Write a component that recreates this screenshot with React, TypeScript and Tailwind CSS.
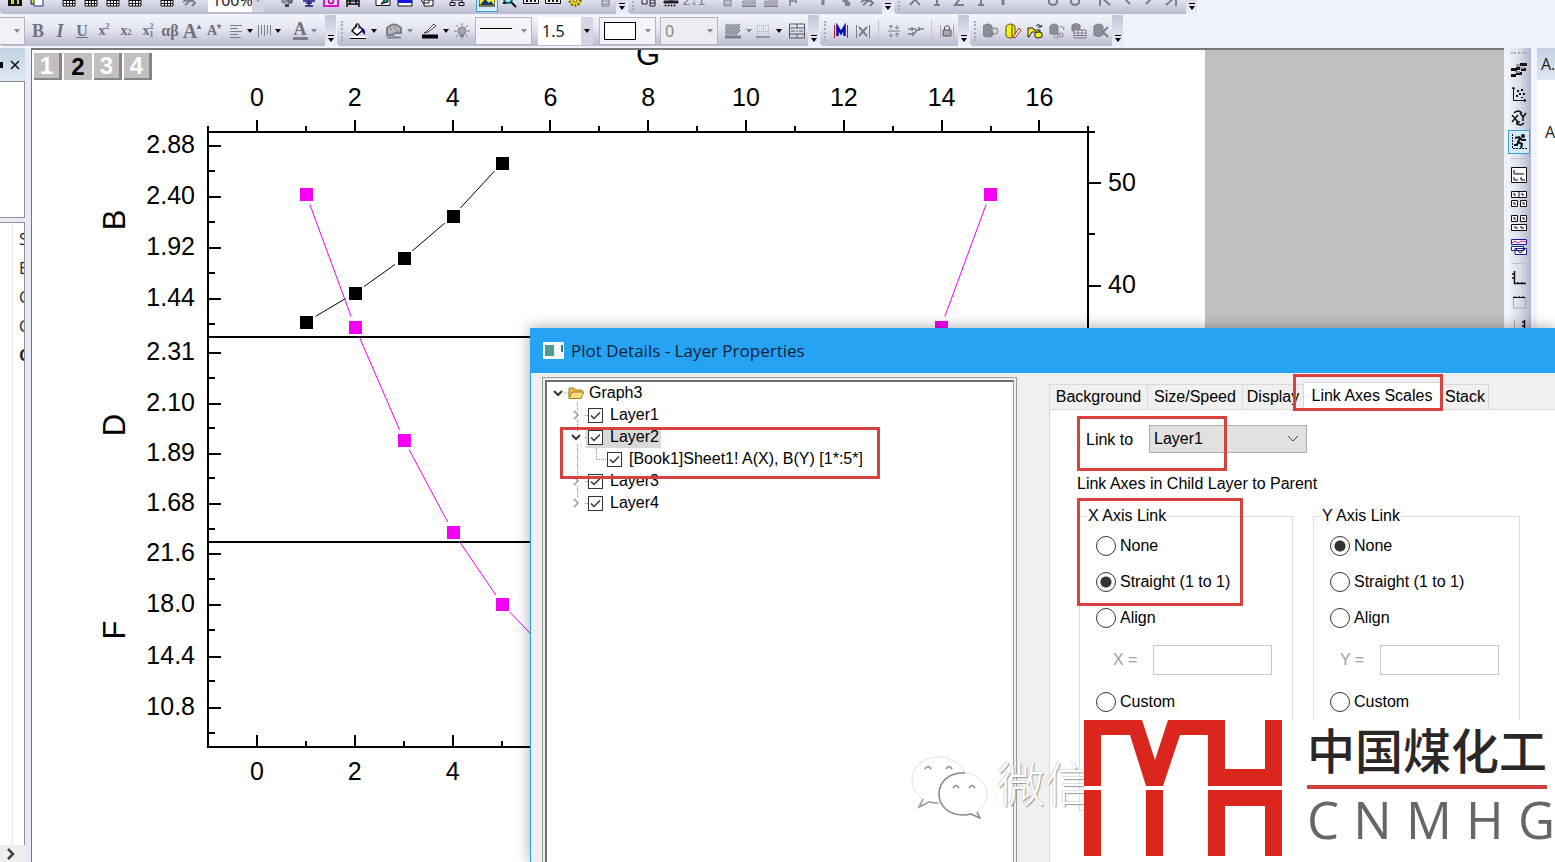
import type { ReactNode } from "react";

const GRAY = "#7d7f87";

/* 16x16 toolbar glyphs */
const glyphs: Record<string, ReactNode> = {
  sheet: (<><path d="M2 2h12v12H2z" fill="#fff" stroke="#111" /><path d="M2 5.500h12M2 8.500h12M2 11.500h12M5.500 2v12M8.500 2v12M11.500 2v12" stroke="#111" /></>),
  binder: (<><path d="M1 4h14v10H1z" fill="#111" /><path d="M4 8h3v4H4zM10 8h2v4h-2z" fill="#d8cf3a" /></>),
  pages: (<><path d="M2 3h9v9H2z" fill="#efe23c" stroke="#111" /><path d="M5 6h9v8H5z" fill="#fff" stroke="#1b2a9b" /></>),
  redo: <path d="M2 10l5-3v2h5l2 2-3 3M4 13l4-3" stroke={GRAY} fill="none" strokeWidth="2" />,
  people: (<><circle cx="5" cy="9" r="3" fill="#8b93a0" /><circle cx="11" cy="9" r="3" fill="#5d7682" /><path d="M6 12h4v3H6z" fill="#444" /></>),
  easel: <path d="M2 9h12M8 9v5M4 14h8M5 11h6" stroke="#15157a" fill="none" strokeWidth="1.500" />,
  magenta: (<><path d="M1 2h14v12H1z" fill="#ffd8fb" stroke="#e010d0" strokeWidth="2" /><circle cx="8" cy="9" r="2.500" fill="none" stroke="#b000a0" strokeWidth="1.500" /></>),
  film: <path d="M2 2v13M14 2v13M2 9h12M2 12h12M5 8v5M11 8v5" stroke="#111" fill="none" strokeWidth="1.500" />,
  panel: (<><path d="M1 2h14v11.500H1z" fill="#fff" stroke="#111" /><path d="M6 12l7-9v7z" fill="#158a8a" stroke="#111" /></>),
  bluewin: (<><path d="M1 1h14v13H1z" fill="#fff" stroke="#111" /><path d="M1 8h14v3H1z" fill="#1616e0" /></>),
  cube: <path d="M1 6h9v5H4zM5 8h9v6H5z" fill="#fff" stroke="#111" />,
  tree: <path d="M8 2v6M3 8h10M3 8v3M13 8v3M1 10.500h5v3H1zM10 10.500h5v3h-5z" fill="none" stroke="#111" />,
  image: (<><path d="M0 3h16v11H0z" fill="#f2e53b" stroke="#111" /><path d="M1 13l5-6 4 4 2-2 3 4z" fill="#133a67" /></>),
  magnify: (<><circle cx="7" cy="7" r="4" fill="#bfe9f5" stroke="#0a6b86" strokeWidth="2" /><path d="M10 10l5 5M2 11h3" stroke="#111" strokeWidth="2" /></>),
  dots: (<><path d="M.5 3h15v8.500H.5z" fill="#fff" stroke="#111" /><path d="M3 9h2M7 9h2M11 9h2" stroke="#111" strokeWidth="2" /></>),
  gear: (<><circle cx="8" cy="8" r="5.500" fill="#f0d71d" stroke="#7b6a00" strokeWidth="2.500" strokeDasharray="2 1.500" /><circle cx="8" cy="8" r="2" fill="#fff" stroke="#7b6a00" /></>),
  list: <path d="M5 2h7v12H5zM5 6h7M5 9h7M5 12h7" fill="none" stroke={GRAY} />,
  listdark: <path d="M1 7h5v5H1zM9 4h5v10H9zM9 8h5M9 11h5" fill="none" stroke="#222" />,
  stamp: <path d="M6 2h4v6H6zM1 9h14v2H1zM2 13h1v1H2zM5 13h1v1H5zM8 13h1v1H8zM11 13h1v1h-1z" fill="#222" stroke="#222" />,
  hist: <path d="M2 14V9h2v5M6 14V7h2v7M10 14V4h2v10M14 14V8M1 14.500h14" fill="none" stroke={GRAY} />,
  bracket: <path d="M4 9h8M5 9v5M11 9v2" fill="none" stroke={GRAY} strokeWidth="1.500" />,
  pencil: <path d="M3 5l8 8M5 4l8 8M8 13h5" fill="none" stroke={GRAY} strokeWidth="2" />,
  letterX: <path d="M3 2l10 11M13 2L3 13" fill="none" stroke={GRAY} strokeWidth="2" />,
  letterT: <path d="M8 2v11M5 13h6" fill="none" stroke={GRAY} strokeWidth="2" />,
  letterZ: <path d="M12 3l-8 10h9" fill="none" stroke={GRAY} strokeWidth="2" />,
  stem: <path d="M8 3v10" fill="none" stroke={GRAY} strokeWidth="3" />,
  round: <path d="M4 5v6q4 4 8 0V5" fill="none" stroke={GRAY} strokeWidth="2" />,
  first: <path d="M3 2v12M5 6l8 7" fill="none" stroke={GRAY} strokeWidth="2" />,
  prev: <path d="M11 3L6 7l5 5" fill="none" stroke={GRAY} strokeWidth="2" />,
  next: <path d="M5 3l5 4-5 5" fill="none" stroke={GRAY} strokeWidth="2" />,
  last: <path d="M13 2v12M11 6l-8 7" fill="none" stroke={GRAY} strokeWidth="2" />,
  align: <path d="M2 2.500h12M2 5.500h8M2 8.500h12M2 11.500h8M2 14.500h11" stroke={GRAY} />,
  valign: <path d="M2.500 2v12M5.500 2v9M8.500 2v11M11.500 2v9M14.500 2v10" stroke={GRAY} />,
  bucket: (<><path d="M7 2L2 8l5 4 6-5-4-4" fill="#fff" stroke="#111" strokeWidth="1.500" /><path d="M6 5V1h3v5" stroke="#111" fill="none" /><path d="M11 5q5 0 4 7l-3-3z" fill="#15157a" /><path d="M0 14h16" stroke="#fff" strokeWidth="2" /><path d="M0 15.500h16" stroke="#111" /></>),
  palette: (<><path d="M1 5q7-7 14 0v5H9l-2 2H1z" fill="#b6b7bd" stroke={GRAY} strokeWidth="2" /><path d="M4 6h2M8 5h2M10 8h3" stroke="#777" /><path d="M1 14.500h14" stroke={GRAY} strokeWidth="2" /></>),
  linecolor: (<><path d="M4 9l8-8 2 2-8 6-4 1z" fill="#fff" stroke="#444" /><path d="M0 13.500h16" stroke="#000" strokeWidth="4" /></>),
  bulb: (<><circle cx="8" cy="8" r="4" fill="#a5a7ad" stroke={GRAY} /><path d="M6 12h4v2H6z" fill={GRAY} /><path d="M8 0v3M8 13v3M0 8h3M13 8h3M2 2l2 2M12 12l2 2M14 2l-2 2M2 14l2-2" stroke={GRAY} /></>),
  hatch: (<><path d="M0 10L9 1M0 7l6-6M1 12L12 1M4 12L15 1M7 12l8-8M10 12l5-5M0 4l3-3" stroke={GRAY} strokeWidth="1.500" /><path d="M0 14h16" stroke={GRAY} strokeWidth="3" /></>),
  grid: (<><path d="M2 2.500h12M2 8.500h12M2.500 2v10M8.500 2v10M13.500 2v10" stroke="#aaa" strokeDasharray="1 1" /><path d="M1 14h14" stroke={GRAY} strokeWidth="1.500" /></>),
  merge: <path d="M.5 1h15v14H.5zM0 5h16M0 11h16M8 1v4M8 11v4M2 8h4M10 8h4M7 8h2" fill="none" stroke="#55565c" />,
  mask: (<><path d="M1.500 2v13M14.500 2v13" stroke="#c01822" /><path d="M4.500 13V4l3.500 6 3.500-6v9" fill="none" stroke="#0a0ab0" strokeWidth="2.500" /></>),
  unmask: (<><path d="M1.500 2v13M14.500 2v13" stroke={GRAY} /><path d="M4 4l8 9M12 4l-8 9" stroke={GRAY} strokeWidth="2" /></>),
  expand: <path d="M2 8h12M5 2v4M3 4l2-2 2 2M11 2v4M9 4l2 2 2-2M5 10v4M3 12l2 2 2-2M11 10v4M9 12l2-2 2 2" stroke={GRAY} fill="none" />,
  swap: <path d="M0 6h8M0 11h6l3-4 3-1h4M4 4v4M5 9v4M11 4v4" stroke={GRAY} fill="none" strokeWidth="1.500" />,
  lock: (<><path d="M1.500 2v13M14.500 2v13" stroke="#aaa" /><path d="M4 7h8v6H4z" fill="#aaa" stroke="#55565c" /><path d="M5.500 7V4q2.500-3 5 0v3" fill="none" stroke="#55565c" /></>),
  db: (<><path d="M0 3q5-4 9 0v9q-5 4-9 0z" fill="#8d8f96" stroke={GRAY} /><circle cx="12" cy="8" r="3" fill="#d5d6de" stroke={GRAY} /><path d="M10 11l-3 3" stroke={GRAY} strokeWidth="2" /></>),
  dbedit: (<><path d="M1 3q5-4 9 0v10q-5 4-9 0z" fill="#f4ef20" stroke="#5a5600" /><path d="M6 2h2v12H6z" fill="#a09a10" /><path d="M8 14l6-9 2 2-6 8z" fill="#fff" stroke="#b02010" /></>),
  dbopen: (<><path d="M1 5h5l1 2h6v2H5l-3 5H1z" fill="#f4ef20" stroke="#222" /><path d="M9 3q3-3 5 1l1-2M14 4h-3" stroke="#111" fill="none" /><path d="M8 10q4-2 7 0v4q-4 2-7 0z" fill="#f4ef20" stroke="#222" /></>),
  dbglasses: (<><path d="M1 3q5-4 8 0v8H1z" fill="#8d8f96" stroke={GRAY} /><circle cx="7" cy="13" r="2" fill="#ddd" stroke={GRAY} /><circle cx="12" cy="12" r="2" fill="#ddd" stroke={GRAY} /><path d="M11 4q3-2 4 3" stroke={GRAY} fill="none" /></>),
  dbgrid: (<><path d="M1 2q5-3 8 0v6H1z" fill="#8d8f96" stroke={GRAY} /><path d="M3 7h12v8H3zM3 10h12M3 12.500h12M7 7v8M11 7v8" fill="#e5e5ee" stroke={GRAY} /></>),
  dbcut: (<><path d="M1 3q5-4 9 0v9q-5 3-9 0z" fill="#8d8f96" stroke={GRAY} /><path d="M15 4l-5 5 5 5" stroke={GRAY} fill="none" strokeWidth="2" /></>),
  stairs: (<><path d="M9 1h7v3H9zM5 5h4v3H5zM0 6h6v3H0zM10 6h5v3h-5zM0 12h5v3H0zM5 10h6v3H5z" fill="#111" /><path d="M5 2h4v3H5zM9 5h4v2H9zM4 9h5v2H4z" fill="#999" /></>),
  scatter: (<><path d="M2.500 1v13.500H15M1 3l1.500-2L4 3M13 13l2 1.500-2 1.500" stroke="#111" fill="none" /><path d="M6 4h2v2H6zM10 3h2v2h-2zM8 7h2v2H8zM12 7h2v2h-2zM5 9h2v2H5zM10 11h2v1h-2z" fill="#111" /></>),
  xy: (<><path d="M1 5l6 7M7 5l-6 7M9 3l3 4 3-4M12 7v4" stroke="#111" fill="none" strokeWidth="1.500" /><path d="M3 3q4-4 8 0M13 13q-4 4-7 0M6 15v-3h3" stroke="#111" fill="none" strokeWidth="1.500" /></>),
  run: (<><path d="M1.500 0v14.500H16" stroke="#111" fill="none" strokeDasharray="2 1" /><circle cx="12" cy="2" r="2" fill="#111" /><path d="M4 4l4-1 3 3 4 0M9 4L7 8l4 2-1 4M7 8l-1 3-3 0" stroke="#111" fill="none" strokeWidth="2" /></>),
  lay1: <path d="M.5.5h15v15H.5zM3 3v4h10M3 10v3h4M10 10v3h4" fill="#fff" stroke="#111" />,
  lay2: <path d="M.5.500h15v6H.5zM8 .5v6M.5 9.500h6v6h-6zM9.500 9.500h6v6h-6zM3 2v2h2M11 2v2h2M3 11v2h2M12 11v2h2" fill="#fff" stroke="#111" />,
  lay3: <path d="M.5.500h6v6h-6zM9.500.500h6v6h-6zM.5 9.500h15v6H.5zM3 2v2h2M12 2v2h2M4 11v2h3M10 11v2h3" fill="#fff" stroke="#111" />,
  lay4: (<><path d="M.5.500h15v5H.5z" fill="#fff" stroke="#1a1a9a" /><path d="M1 4l3-2 3 2 4-2 4 1" stroke="#d01090" fill="none" /><path d="M.5 7.500h12v4H.5zM4 9.500h11.500v6H4z" fill="#fff" stroke="#1a1a9a" /><path d="M5 10l4 4 5-4" stroke="#111" fill="none" /></>),
  corner: <path d="M3.500 1v12.500H15M1 4h2M1 8h2M7 12v2M11 12v2" stroke="#111" fill="none" strokeWidth="1.500" />,
  topaxis: (<><path d="M2 3.500h12.500M4 2v2M8 2v2M12 2v2" stroke="#111" fill="none" /><path d="M2.500 4v10h12V4" stroke="#aaa" fill="none" /></>),
  rightaxis: (<><path d="M13.500 2v12M11 4h2M11 8h2" stroke="#111" fill="none" strokeWidth="1.500" /><path d="M3.500 2v12h10" stroke="#aaa" fill="none" /></>),
};

function Tool({ name, active }: { name: string; active?: boolean }) {
  return (
    <button
      aria-label={name}
      className={[
        "flex h-6 w-[22px] shrink-0 items-center justify-center",
        active ? "border border-[#3c9ad8] bg-[#d3eafa]" : "",
      ].join(" ")}
    >
      <svg viewBox="0 0 16 16" className="h-4 w-4 shrink-0">{glyphs[name]}</svg>
    </button>
  );
}

function Arrow({ dim }: { dim?: boolean }) {
  return (
    <svg viewBox="0 0 6 4" className="h-1 w-1.5 shrink-0">
      <path d="M0 0h6L3 4z" fill={dim ? "#8a8b93" : "#000"} />
    </svg>
  );
}

function Grip() {
  return <div className="mx-1 h-5 w-0.5 shrink-0 self-center border-l-2 border-dotted border-[#a9abbd]" />;
}

function Overflow() {
  return (
    <div className="flex w-[11px] shrink-0 flex-col items-center justify-end gap-0.5 self-stretch rounded-br bg-linear-to-b from-[#c4c5d8] to-[#eff2fb] pb-1">
      <div className="h-px w-1.5 bg-black" />
      <Arrow />
    </div>
  );
}

function Letter({ className, label, children }: { className: string; label: string; children: ReactNode }) {
  return (
    <button
      aria-label={label}
      className={`flex h-6 w-[22px] shrink-0 items-center justify-center font-['Liberation_Serif',serif] leading-none text-[#70727a] ${className}`}
    >
      {children}
    </button>
  );
}

const strip = "flex shrink-0 bg-linear-to-b from-[#f4f6fc] via-[#e0e2ee] to-[#b9bad0]";
const box = "flex h-7 shrink-0 items-center border";

function Toolbars() {
  return (
    <header className="shrink-0 bg-[#eff3fc]">
      <div className="flex h-[14px] items-end gap-px overflow-hidden">
        <div className={`${strip} h-7 items-center rounded-b pl-1`}>
          <Tool name="binder" />
          <Tool name="pages" />
          <span className="w-2.5 shrink-0" />
          <Tool name="sheet" />
          <Tool name="sheet" />
          <Tool name="sheet" />
          <Tool name="sheet" />
          <span className="w-2.5 shrink-0" />
          <Tool name="sheet" />
          <Tool name="redo" />
          <span className="w-2 shrink-0" />
          <div className="flex h-6 w-[56px] shrink-0 items-center bg-white">
            <select aria-label="Zoom" className="h-6 w-11 appearance-none bg-white pl-1 font-['Noto_Sans',sans-serif] text-base leading-6 text-[#222]">
              <option>100%</option>
            </select>
            <span className="flex h-6 w-3 items-center justify-center bg-[#d4d5e4]"><Arrow dim /></span>
          </div>
          <span className="w-3 shrink-0" />
          <Tool name="people" />
          <Tool name="easel" />
          <Tool name="magenta" />
          <Tool name="film" />
          <span className="w-2 shrink-0" />
          <Tool name="panel" />
          <Tool name="bluewin" />
          <Tool name="cube" />
          <span className="w-2 shrink-0" />
          <Tool name="tree" />
          <span className="w-2 shrink-0" />
          <Tool name="image" active />
          <Tool name="magnify" />
          <Tool name="dots" />
          <Tool name="dots" />
          <Tool name="gear" />
          <span className="w-2 shrink-0" />
          <Tool name="list" />
          <Overflow />
        </div>
        <div className={`${strip} h-7 items-center rounded-b`}>
          <Grip />
          <Tool name="listdark" />
          <Tool name="stamp" />
          <button className="h-6 w-6 shrink-0 font-['Liberation_Sans',sans-serif] text-sm leading-6 text-[#7d7f87]">2↓1</button>
          <span className="w-2.5 shrink-0" />
          <Tool name="list" />
          <Tool name="hist" />
          <Tool name="hist" />
          <Tool name="bracket" />
          <span className="w-2 shrink-0" />
          <Tool name="stem" />
          <Tool name="pencil" />
          <Tool name="redo" />
          <span className="w-1 shrink-0" />
          <Overflow />
        </div>
        <div className={`${strip} h-7 items-center rounded-b`}>
          <Grip />
          <Tool name="letterX" />
          <Tool name="letterT" />
          <Tool name="letterZ" />
          <Tool name="letterT" />
          <Tool name="stem" />
          <span className="w-7 shrink-0" />
          <Tool name="round" />
          <Tool name="round" />
          <span className="w-2 shrink-0" />
          <Tool name="first" />
          <Tool name="prev" />
          <Tool name="next" />
          <Tool name="last" />
          <span className="w-1 shrink-0" />
          <Overflow />
        </div>
      </div>

      <div className="flex h-[34px] items-stretch gap-px pt-px pb-0.5">
        <div className={`${strip} items-center rounded-b`}>
          <div className={`${box} w-[25px] justify-end border-l-0 border-[#b3b4bf] bg-[#f2f2f6] pr-1`}><Arrow dim /></div>
          <span className="w-0.5 shrink-0" />
          <Letter label="Bold" className="text-lg font-bold">B</Letter>
          <Letter label="Italic" className="text-lg font-bold italic">I</Letter>
          <Letter label="Underline" className="text-base font-bold underline">U</Letter>
          <Letter label="Superscript" className="text-sm font-bold">x<sup className="text-[8px]">2</sup></Letter>
          <Letter label="Subscript" className="text-sm font-bold">x<sub className="text-[8px]">2</sub></Letter>
          <Letter label="Super-subscript" className="text-sm font-bold">
            x<span className="flex flex-col text-[8px]"><span>2</span><span>1</span></span>
          </Letter>
          <Letter label="Greek" className="text-base font-bold">αβ</Letter>
          <Letter label="Increase font" className="text-xl font-bold">A<sup className="text-[8px]">▴</sup></Letter>
          <Letter label="Decrease font" className="text-sm font-bold">A<sup className="text-[8px]">▾</sup></Letter>
          <Tool name="align" />
          <Arrow />
          <Tool name="valign" />
          <Arrow />
          <span className="w-2 shrink-0" />
          <Letter label="Font color" className="text-lg font-bold">
            <span className="border-b-3 border-[#7d7f87] px-px leading-4">A</span>
          </Letter>
          <Arrow dim />
          <span className="w-2 shrink-0" />
          <Overflow />
        </div>
        <div className={`${strip} items-center rounded-b`}>
          <Grip />
          <Tool name="bucket" />
          <span className="w-0.5 shrink-0" />
          <Arrow />
          <span className="w-1.5 shrink-0" />
          <Tool name="palette" />
          <span className="w-0.5 shrink-0" />
          <Arrow dim />
          <span className="w-1.5 shrink-0" />
          <Tool name="linecolor" />
          <span className="w-0.5 shrink-0" />
          <Arrow />
          <span className="w-0.5 shrink-0" />
          <Tool name="bulb" />
          <span className="w-0.5 shrink-0" />
          <div className={`${box} w-[57px] justify-between border-[#b3b4bf] bg-[#f4f4f8] px-1`}>
            <span className="mb-1 h-px w-8 bg-black" /><Arrow dim />
          </div>
          <div className="ml-1.5 flex h-7 w-[55px] shrink-0 items-center bg-white">
            <select aria-label="Line width" defaultValue="1.5" className="h-7 w-[43px] appearance-none bg-white pl-1 font-['Noto_Sans',sans-serif] text-base text-[#222]">
              <option>1.5</option>
            </select>
            <span className="flex h-7 w-3 items-center justify-center bg-[#d4d5e4]"><Arrow /></span>
          </div>
          <div className={`${box} ml-1.5 w-[57px] justify-between border-[#b3b4bf] bg-[#f4f4f8] px-1`}>
            <span className="h-[18px] w-8 border border-black bg-white" /><Arrow dim />
          </div>
          <div className={`${box} ml-1 w-[58px] justify-between border-[#b3b4bf] bg-[#ededf1] pr-1`}>
            <select aria-label="Transparency" defaultValue="0" className="w-10 appearance-none pl-1 font-['Noto_Sans',sans-serif] text-base leading-6 text-[#888]">
              <option>0</option>
            </select>
            <Arrow dim />
          </div>
          <span className="w-1 shrink-0" />
          <Tool name="hatch" />
          <span className="w-0.5 shrink-0" />
          <Arrow dim />
          <Tool name="grid" />
          <span className="w-0.5 shrink-0" />
          <Arrow />
          <span className="w-1 shrink-0" />
          <Tool name="merge" />
          <Overflow />
        </div>
        <div className={`${strip} items-center rounded-b`}>
          <Grip />
          <Tool name="mask" />
          <Tool name="unmask" />
          <span className="mx-1 h-6 w-px shrink-0 bg-[#c3c5d4]" />
          <Tool name="expand" />
          <Tool name="swap" />
          <span className="mx-1 h-6 w-px shrink-0 bg-[#c3c5d4]" />
          <Tool name="lock" />
          <Overflow />
        </div>
        <div className={`${strip} items-center rounded-b`}>
          <Grip />
          <Tool name="db" />
          <Tool name="dbedit" />
          <Tool name="dbopen" />
          <Tool name="dbglasses" />
          <Tool name="dbgrid" />
          <Tool name="dbcut" />
          <Overflow />
        </div>
      </div>
    </header>
  );
}

function LeftDock() {
  return (
    <aside className="flex w-[25px] shrink-0 flex-col overflow-hidden bg-white">
      <div className="flex h-[33px] shrink-0 items-center justify-end gap-1.5 bg-linear-to-b from-[#c3d2e2] to-[#dde8f3] pr-1">
        <span className="h-1.5 w-1 bg-black" />
        <button aria-label="Close" className="h-3 w-3">
          <svg viewBox="0 0 12 12" className="h-3 w-3"><path d="M2 2l8 8M10 2l-8 8" stroke="#111" strokeWidth="1.500" /></svg>
        </button>
      </div>
      <div className="h-[137px] shrink-0 border-y border-r border-[#8d909c]" />
      <div className="h-1 shrink-0 bg-[#e9eaf3]" />
      <div className="flex flex-1 border-t border-r border-[#8d909c]">
        <div className="w-[13px] border-r border-[#e8e8e8]" />
        <ul className="w-[11px] overflow-hidden pt-0.5 pl-1.5 font-['Open_Sans',sans-serif] text-base leading-[29px] text-[#222]">
          <li>S</li>
          <li>E</li>
          <li>C</li>
          <li>C</li>
          <li className="font-bold">C</li>
        </ul>
      </div>
      <button aria-label="Scroll right" className="flex h-[17px] shrink-0 items-center bg-[#eeeeee] pl-1.5">
        <svg viewBox="0 0 10 12" className="h-3 w-2.5"><path d="M2 1l5 5-5 5" fill="none" stroke="#444" strokeWidth="2.500" /></svg>
      </button>
    </aside>
  );
}

const unit = (v: number) => 257 + v * 48.9;

const yLabels = [
  ["2.88", 145], ["2.40", 196], ["1.92", 247], ["1.44", 298],
  ["2.31", 352], ["2.10", 403], ["1.89", 453], ["1.68", 503],
  ["21.6", 553], ["18.0", 604], ["14.4", 656], ["10.8", 707],
] as const;
const yMinor = [171, 222, 273, 324, 378, 428, 478, 529, 579, 630, 681, 733];

type Pt = [number, number];
const black: Pt[] = [[306, 322], [355, 293], [404, 258], [453, 216], [502, 163]];
const left: Pt[] = [[306, 194], [355, 327], [404, 440], [453, 532], [502, 604], [551, 655]];
const right: Pt[] = [[990, 194], [941, 327]];

// line segments stop short of the markers
function Series({ pts, color }: { pts: Pt[]; color: string }) {
  return (
    <g>
      {pts.slice(1).map(([x2, y2], i) => {
        const [x1, y1] = pts[i];
        const d = Math.hypot(x2 - x1, y2 - y1);
        const ux = ((x2 - x1) / d) * 11;
        const uy = ((y2 - y1) / d) * 11;
        return <line key={i} x1={x1 + ux} y1={y1 + uy} x2={x2 - ux} y2={y2 - uy} stroke={color} strokeWidth="1" />;
      })}
      {pts.map(([x, y]) => <rect key={x} x={x - 6} y={y - 6} width="13" height="13" fill={color} />)}
    </g>
  );
}

function Graph() {
  const minors = Array.from({ length: 19 }, (_, i) => i - 1);
  return (
    <svg viewBox="32 50 1173 812" className="h-[812px] w-[1173px] font-['Liberation_Sans',sans-serif] text-[25px]">
      <g stroke="#000" strokeWidth="2" fill="none" shapeRendering="crispEdges">
        <path d="M208 126V747H1088V126M207 132H1095M208 337H1088M208 542H1088" />
        {minors.map((v) => {
          const long = v % 2 === 0 && v < 17;
          return <path key={v} d={`M${Math.round(unit(v))} ${long ? 120 : 126}V132M${Math.round(unit(v))} ${long ? 735 : 741}V747`} />;
        })}
        {yLabels.map(([t, y]) => <path key={t} d={`M208 ${y + 1}H221`} />)}
        {yMinor.map((y) => <path key={y} d={`M208 ${y}H215`} />)}
        <path d="M1088 183H1101M1088 234H1095M1088 286H1101" />
      </g>
      {[0, 2, 4, 6, 8, 10, 12, 14, 16].map((v) => <text key={v} x={unit(v)} y="106" textAnchor="middle">{v}</text>)}
      {[0, 2, 4].map((v) => <text key={v} x={unit(v)} y="780" textAnchor="middle">{v}</text>)}
      {yLabels.map(([t, y]) => <text key={t} x="195" y={y + 8} textAnchor="end">{t}</text>)}
      <text x="1108" y="191">50</text>
      <text x="1108" y="293">40</text>
      <g textAnchor="middle" className="text-[31px]">
        <text x="648" y="65">G</text>
        <text transform="translate(125 220) rotate(-90)">B</text>
        <text transform="translate(125 425) rotate(-90)">D</text>
        <text transform="translate(125 630) rotate(-90)">F</text>
      </g>
      <Series pts={black} color="#000" />
      <Series pts={left} color="#f400f4" />
      <Series pts={right} color="#f400f4" />
    </svg>
  );
}

function Canvas() {
  return (
    <main className="relative flex min-w-0 flex-1 overflow-hidden border-t-2 border-l border-[#77777c] bg-[#c0c0c0]">
      <div className="shrink-0 bg-white">
        <Graph />
      </div>
      <nav className="absolute top-[3px] left-0.5 flex gap-0.5 font-['Liberation_Sans',sans-serif] text-2xl leading-[26px] font-bold">
        {[1, 2, 3, 4].map((n) => (
          <button
            key={n}
            className={
              n === 2
                ? "h-[27px] w-7 bg-[#c0c0c0] text-black"
                : "h-[27px] w-7 border-r-3 border-b-2 border-[#858585] bg-[#c0c0c0] text-white"
            }
          >
            {n}
          </button>
        ))}
      </nav>
    </main>
  );
}

function SideTools() {
  return (
    <div className="flex w-6 shrink-0 flex-col items-center bg-linear-to-r from-[#f4f6fc] via-[#dcdeeb] to-[#b4b5cb]">
      <div className="my-1 h-0.5 w-4 border-t-2 border-dotted border-[#a9abbd]" />
      <Tool name="stairs" />
      <Tool name="scatter" />
      <Tool name="xy" />
      <Tool name="run" active />
      <div className="my-1 h-px w-4 shrink-0 bg-[#bfc2d2]" />
      <Tool name="lay1" />
      <Tool name="lay2" />
      <Tool name="lay3" />
      <Tool name="lay4" />
      <div className="mt-1 mb-0.5 h-px w-4 shrink-0 bg-[#bfc2d2]" />
      <Tool name="corner" />
      <Tool name="topaxis" />
      <Tool name="rightaxis" />
    </div>
  );
}

function Chevron({ open }: { open?: boolean }) {
  return (
    <svg viewBox="0 0 10 10" className="h-2.5 w-2.5 shrink-0">
      {open
        ? <path d="M1 3l4 4 4-4" fill="none" stroke="#333" strokeWidth="2" />
        : <path d="M3 1l4 4-4 4" fill="none" stroke="#999" strokeWidth="1.500" />}
    </svg>
  );
}

function TreeCheck({ label, lit }: { label: string; lit?: boolean }) {
  return (
    <label className={["flex h-[21px] items-center gap-[7px] px-0.5 whitespace-nowrap", lit ? "bg-[#d9d9d9]" : ""].join(" ")}>
      <span className="relative h-[15px] w-[15px]">
        <input type="checkbox" defaultChecked className="peer block h-[15px] w-[15px] appearance-none border border-[#333] bg-white" />
        <svg viewBox="0 0 15 15" className="pointer-events-none absolute inset-0 hidden peer-checked:block">
          <path d="M3 7.500l3 3 6-6" fill="none" stroke="#333" strokeWidth="1.500" />
        </svg>
      </span>
      {label}
    </label>
  );
}

function LayerTree() {
  return (
    <div className="w-[475px] shrink-0 border border-b-0 border-[#9a9a9a] p-0.5 pb-0">
      <div className="relative h-full border-t-2 border-r border-l-2 border-t-[#6e6e6e] border-r-[#9a9a9a] border-l-[#6e6e6e] bg-white">
        <svg viewBox="0 0 120 140" className="absolute top-0 left-0 h-[140px] w-[120px]">
          <path d="M17 11h5M30.500 20v9M30.500 38v12M30.500 62v32M30.500 104v12M38 33.500h5M38 55.500h5M38 99.500h5M38 121.500h5M49.500 66v12M50 77.500h12" stroke="#888" strokeDasharray="1 1" fill="none" />
        </svg>
        <ul className="relative">
          <li className="flex h-[22px] items-center gap-[5px] pl-1.5">
            <Chevron open />
            <svg viewBox="0 0 16 14" className="h-3.5 w-4">
              <path d="M1 12V2h5l1 2h7v3" fill="#e9bd4f" stroke="#a77d1a" />
              <path d="M1 12.500L4 6h12l-3 6.500z" fill="#fbdb7b" stroke="#a77d1a" />
            </svg>
            Graph3
          </li>
          <li className="flex h-[22px] items-center gap-[5px] pl-6"><Chevron /><TreeCheck label="Layer1" /></li>
          <li className="flex h-[22px] items-center gap-[5px] pl-6"><Chevron open /><TreeCheck label="Layer2" lit /></li>
          <li className="flex h-[22px] items-center pl-[58px]"><TreeCheck label="[Book1]Sheet1! A(X), B(Y) [1*:5*]" /></li>
          <li className="flex h-[22px] items-center gap-[5px] pl-6"><Chevron /><TreeCheck label="Layer3" /></li>
          <li className="flex h-[22px] items-center gap-[5px] pl-6"><Chevron /><TreeCheck label="Layer4" /></li>
        </ul>
      </div>
    </div>
  );
}

function AxisLink({ axis, picked, className }: { axis: string; picked: string; className: string }) {
  const option = (label: string) => (
    <label className="flex h-9 items-center gap-1 pl-2">
      <input
        type="radio"
        name={axis}
        defaultChecked={label === picked}
        className="h-5 w-5 appearance-none rounded-full border border-[#333] bg-white checked:bg-[radial-gradient(circle,#333_5px,#fff_6px)]"
      />
      {label}
    </label>
  );
  return (
    <fieldset className={`border border-[#dcdcdc] px-2 pb-[90px] ${className}`}>
      <legend className="leading-6">{axis} Axis Link</legend>
      {option("None")}
      {option("Straight (1 to 1)")}
      {option("Align")}
      <label className="flex h-12 items-center justify-end pr-3 text-[#a0a0a0]">
        <span className="w-10">{axis} =</span>
        <input disabled className="h-[30px] w-[119px] border border-[#c6c6c6] bg-white" />
      </label>
      {option("Custom")}
    </fieldset>
  );
}

function Tab({ className, active, children }: { className: string; active?: boolean; children: ReactNode }) {
  return (
    <button
      role="tab"
      aria-selected={!!active}
      className={[
        "border border-b-0 border-[#d9d9d9] whitespace-nowrap",
        active ? "relative -mb-px h-7 bg-white pb-0.5" : "-mr-px h-[25px] bg-[#f0f0f0]",
        className,
      ].join(" ")}
    >
      {children}
    </button>
  );
}

function Mark({ className }: { className: string }) {
  return <div className={`pointer-events-none absolute border-3 border-[#d9413d] ${className}`} />;
}

function PlotDetails() {
  return (
    <section
      role="dialog"
      aria-label="Plot Details"
      className="absolute top-[328px] right-0 bottom-0 left-[530px] flex flex-col border-l border-[#26a3f2] bg-[#f0f0f0] font-['Liberation_Sans',sans-serif] text-base text-black shadow-[0_0_14px_rgba(0,0,0,0.35)]"
    >
      <div className="flex h-[45px] shrink-0 items-center gap-[7px] bg-[#26a3f2] pl-3 font-['Open_Sans',sans-serif] text-[17px] text-[#0b2540]">
        <svg viewBox="0 0 21 17" className="h-[17px] w-[21px]">
          <path d="M0 0h21v17H0z" fill="#f4f7f7" />
          <path d="M2 3h9v11H2z" fill="#4f9d8c" />
          <path d="M18 3h2v7h-2z" fill="#357d6d" />
        </svg>
        Plot Details - Layer Properties
      </div>
      <div className="flex min-h-0 flex-1 pt-1 pl-[11px]">
        <LayerTree />
        <div className="ml-8 flex min-w-0 flex-1 flex-col">
          <div role="tablist" className="flex h-8 shrink-0 items-end">
            <Tab className="w-[99px]">Background</Tab>
            <Tab className="w-[96px]">Size/Speed</Tab>
            <Tab className="w-[62px]">Display</Tab>
            <Tab className="w-[138px]" active>Link Axes Scales</Tab>
            <Tab className="w-12">Stack</Tab>
          </div>
          <div className="flex-1 border-t border-l border-[#d9d9d9] bg-white">
            <div className="flex pt-[15px] pl-9">
              <label htmlFor="parent" className="w-[63px] leading-[30px]">Link to</label>
              <span className="relative">
                <select id="parent" className="h-7 w-[158px] appearance-none border border-[#adadad] bg-[#e1e1e1] pl-1">
                  <option>Layer1</option>
                </select>
                <svg viewBox="0 0 12 8" className="pointer-events-none absolute top-2.5 right-2 h-2 w-3">
                  <path d="M1 1l5 5 5-5" fill="none" stroke="#444" />
                </svg>
              </span>
            </div>
            <p className="mt-[17px] pl-[27px] leading-6">Link Axes in Child Layer to Parent</p>
            <div className="mt-2 flex gap-5 pl-[29px]">
              <AxisLink axis="X" picked="Straight (1 to 1)" className="w-[214px]" />
              <AxisLink axis="Y" picked="None" className="w-[207px]" />
            </div>
          </div>
        </div>
      </div>
      <Mark className="top-[99px] left-[29px] h-[52px] w-[320px]" />
      <Mark className="top-[46px] left-[762px] h-[37px] w-[150px]" />
      <Mark className="top-[88px] left-[546px] h-[55px] w-[150px]" />
      <Mark className="top-[170px] left-[546px] h-[108px] w-[166px]" />
    </section>
  );
}

function WeChatMark() {
  return (
    <div className="pointer-events-none absolute right-[471px] bottom-[42px] flex h-[66px] w-[173px] items-center gap-2 overflow-hidden">
      <svg viewBox="0 0 78 64" className="h-16 w-[78px] shrink-0">
        <g fill="#fff" stroke="#e2e2e2">
          <path d="M28 2C12 2 1 12 1 25c0 8 4 14 11 19l-3 8 10-5q5 1 10 1C44 48 55 38 55 25S43 2 28 2z" />
          <path d="M12 44l-4 8 10-5q5 1 9 1" fill="none" stroke="#999" strokeWidth="1.500" />
          <path d="M52 18c-14 0-24 9-24 21s10 21 24 21q4 0 8-1l8 4-2-7c6-4 10-10 10-17 0-12-10-21-24-21z" />
        </g>
        <path d="M54 18c-16-1-26 9-26 21s10 21 24 21q4 0 8-1l9 4-3-6" fill="none" stroke="#888" strokeWidth="1.500" />
        <path d="M14 14q3-5 6 0M35 14q3-5 6 0M42 33q3-5 6 0M58 33q3-5 6 0" fill="none" stroke="#888" strokeWidth="1.500" />
      </svg>
      <span className="shrink-0 pb-3 font-['Noto_Sans_CJK_SC',sans-serif] text-5xl font-light whitespace-nowrap text-white [text-shadow:1px_1px_1px_#999,-1px_-1px_1px_#ddd]">
        微信
      </span>
    </div>
  );
}

function Brand() {
  return (
    <div className="absolute right-0 bottom-0 flex h-[142px] w-[471px] bg-white">
      <svg viewBox="0 0 198 136" className="h-[136px] w-[198px] shrink-0" fill="#db261d">
        <path d="M0 0H58L71 40 84 0H141V49H181V0H198V66H124V15H96L79 66H62L46 15H17V66H0z" />
        <path d="M0 70H17V136H0zM62 70H79V136H62zM124 70H198V136H181V86H141V136H124z" />
      </svg>
      <div className="flex min-w-0 flex-1 flex-col pt-1 pl-[25px]">
        <p className="font-['Noto_Sans_CJK_SC',sans-serif] text-5xl leading-[49px] font-medium whitespace-nowrap text-[#2b2726]">中国煤化工</p>
        <div className="mt-3 mr-2 h-1 bg-[#d33f39]" />
        <p aria-label="CNMHG" className="mt-1 flex justify-between font-['Open_Sans',sans-serif] text-[51px] leading-[52px] text-[#666]">
          {["C", "N", "M", "H", "G"].map((c) => <span key={c}>{c}</span>)}
        </p>
      </div>
    </div>
  );
}

export default function App() {
  return (
    <div className="relative flex h-screen flex-col overflow-hidden bg-[#eff3fc]">
      <Toolbars />
      <div className="flex min-h-0 flex-1">
        <LeftDock />
        <div className="w-1.5 shrink-0 bg-[#e9eaf3]" />
        <Canvas />
        <div className="w-[3px] shrink-0" />
        <SideTools />
        <div className="w-1.5 shrink-0" />
        <aside className="w-[18px] shrink-0 overflow-hidden bg-white pl-1 font-['Open_Sans',sans-serif] text-base whitespace-nowrap text-[#222]">
          <div className="-ml-1 h-8 bg-linear-to-b from-[#c3d2e2] to-[#dde8f3] pl-1 leading-8">A.</div>
          <p className="mt-10 pl-1">A</p>
        </aside>
      </div>
      <PlotDetails />
      <WeChatMark />
      <Brand />
    </div>
  );
}
